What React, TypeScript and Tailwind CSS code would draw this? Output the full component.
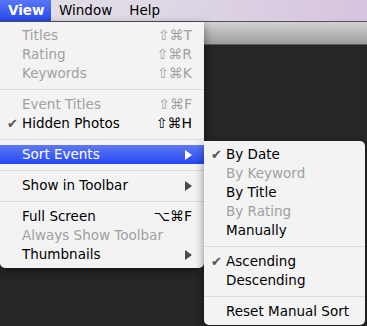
import React from 'react'

type Item =
  | { kind: 'sep' }
  | {
      kind: 'item'
      label: string
      shortcut?: string
      disabled?: boolean
      checked?: boolean
      submenu?: boolean
      active?: boolean
    }

const viewMenu: Item[] = [
  { kind: 'item', label: 'Titles', shortcut: '⇧⌘T', disabled: true },
  { kind: 'item', label: 'Rating', shortcut: '⇧⌘R', disabled: true },
  { kind: 'item', label: 'Keywords', shortcut: '⇧⌘K', disabled: true },
  { kind: 'sep' },
  { kind: 'item', label: 'Event Titles', shortcut: '⇧⌘F', disabled: true },
  { kind: 'item', label: 'Hidden Photos', shortcut: '⇧⌘H', checked: true },
  { kind: 'sep' },
  { kind: 'item', label: 'Sort Events', submenu: true, active: true },
  { kind: 'sep' },
  { kind: 'item', label: 'Show in Toolbar', submenu: true },
  { kind: 'sep' },
  { kind: 'item', label: 'Full Screen', shortcut: '⌥⌘F' },
  { kind: 'item', label: 'Always Show Toolbar', disabled: true },
  { kind: 'item', label: 'Thumbnails', submenu: true },
]

const sortMenu: Item[] = [
  { kind: 'item', label: 'By Date', checked: true },
  { kind: 'item', label: 'By Keyword', disabled: true },
  { kind: 'item', label: 'By Title' },
  { kind: 'item', label: 'By Rating', disabled: true },
  { kind: 'item', label: 'Manually' },
  { kind: 'sep' },
  { kind: 'item', label: 'Ascending', checked: true },
  { kind: 'item', label: 'Descending' },
  { kind: 'sep' },
  { kind: 'item', label: 'Reset Manual Sort' },
]

function Arrow({ white }: { white?: boolean }) {
  return (
    <svg width="7" height="10" viewBox="0 0 7 10" className="shrink-0">
      <polygon points="0,0 7,5 0,10" fill={white ? '#ffffff' : '#4a4a4a'} />
    </svg>
  )
}

function MenuRows({ items }: { items: Item[] }) {
  return (
    <>
      {items.map((it, i) => {
        if (it.kind === 'sep') {
          return (
            <div key={i} className="h-[12px] flex items-center">
              <div className="h-px w-full bg-[#dadada]" />
            </div>
          )
        }
        const color = it.active ? 'text-white' : it.disabled ? 'text-[#a0a0a0]' : 'text-black'
        return (
          <div
            key={i}
            className={`h-[19px] flex items-center pr-[12px] ${
              it.active ? 'bg-gradient-to-b from-[#5f78f6] to-[#2546ef]' : ''
            } ${color}`}
          >
            <span className="w-[22px] shrink-0 text-[13px] text-[#555555] pl-[7px] leading-none">
              {it.checked ? '✔' : ''}
            </span>
            <span className="flex-1 whitespace-nowrap">{it.label}</span>
            {it.shortcut && <span className="whitespace-nowrap ml-4 text-[14px]">{it.shortcut}</span>}
            {it.submenu && <Arrow white={it.active} />}
          </div>
        )
      })}
    </>
  )
}

export default function App() {
  return (
    <div
      className="relative w-[367px] h-[326px] overflow-hidden bg-[#262626]"
      style={{ fontFamily: '"DejaVu Sans", Verdana, sans-serif' }}
    >
      <div className="h-[22px] flex items-stretch text-[13.5px] bg-gradient-to-r from-[#e3e2e8] via-[#ddd6e4] to-[#d6c3df] border-b border-[#555055]">
        <div className="w-[51px] flex items-center pl-[8px] font-bold text-white bg-gradient-to-b from-[#5a76f7] to-[#2446ee]">
          View
        </div>
        <div className="flex items-center pl-[8px] text-black">Window</div>
        <div className="flex items-center pl-[17px] text-black">Help</div>
      </div>
      <div className="h-[23px] bg-gradient-to-b from-[#d2d2d2] to-[#9d9d9d] border-b border-[#5a5a5a]" />

      <div className="absolute left-0 top-[22px] w-[204px] py-[4px] bg-[#f3f3f3] rounded-b-[5px] shadow-[0_3px_10px_rgba(0,0,0,0.45)] text-[13.5px]">
        <MenuRows items={viewMenu} />
      </div>

      <div className="absolute left-[204px] top-[141px] w-[161px] py-[4px] bg-[#f3f3f3] rounded-tr-[5px] rounded-b-[5px] shadow-[0_3px_10px_rgba(0,0,0,0.45)] text-[13.5px]">
        <MenuRows items={sortMenu} />
      </div>
    </div>
  )
}
